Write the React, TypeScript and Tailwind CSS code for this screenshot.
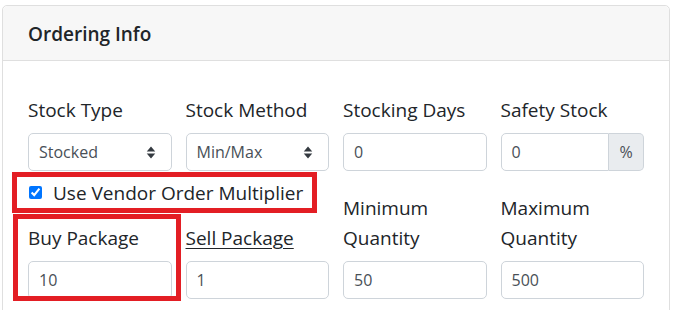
import React from "react";

function Arrow() {
  return (
    <svg width="10" height="13" viewBox="0 0 4 5" preserveAspectRatio="none" className="shrink-0">
      <path d="M2 0.2L0.3 2.1h3.4zM2 4.8L0.3 2.9h3.4z" fill="#343a40" />
    </svg>
  );
}

function Select({ value }: { value: string }) {
  return (
    <div className="h-[38px] border border-[#ced4da] rounded-[5px] pl-[10px] pr-[15px] flex items-center justify-between text-[16px] text-[#495057] bg-white">
      <span>{value}</span>
      <Arrow />
    </div>
  );
}

function TextInput({ value }: { value: string }) {
  return (
    <div className="h-[38px] border border-[#ced4da] rounded-[5px] px-[10px] flex items-center text-[16px] text-[#495057] bg-white">
      {value}
    </div>
  );
}

function Label({ children, underline }: { children: React.ReactNode; underline?: boolean }) {
  return (
    <div className={"text-[19px] leading-[30px] pt-[1px] mb-[8px] text-[#212529]" + (underline ? " underline underline-offset-[3px]" : "")}>
      {children}
    </div>
  );
}

export default function App() {
  return (
    <div className="relative w-[676px] h-[310px] overflow-hidden bg-white pl-[2px] pt-[5px] font-['Open_Sans','Noto_Sans',sans-serif] text-[#212529]">
      <div className="w-[668px] h-[400px] border border-[#dfdfdf] rounded-[5px]">
        <div className="bg-[#f7f7f7] border-b border-[#dfdfdf] px-[25px] pt-[16px] pb-[14px] text-[19px] leading-[24px] font-semibold rounded-t-[5px]">
          Ordering Info
        </div>
        <div className="px-[25px] pt-[33px]">
          <div className="grid grid-cols-4 gap-x-[14px]">
            <div>
              <Label>Stock Type</Label>
              <Select value="Stocked" />
            </div>
            <div>
              <Label>Stock Method</Label>
              <Select value="Min/Max" />
            </div>
            <div>
              <Label>Stocking Days</Label>
              <TextInput value="0" />
            </div>
            <div>
              <Label>Safety Stock</Label>
              <div className="h-[38px] flex text-[16px] text-[#495057]">
                <div className="flex-1 border border-[#ced4da] rounded-l-[5px] px-[10px] flex items-center bg-white">0</div>
                <div className="w-[35px] border border-l-0 border-[#ced4da] rounded-r-[5px] bg-[#e9ecef] flex items-center justify-center">%</div>
              </div>
            </div>
          </div>
          <div className="grid grid-cols-4 gap-x-[14px] items-end mt-[6px]">
            <div>
              <label className="h-[30px] pt-[1px] flex items-center gap-[11px] whitespace-nowrap text-[19px] leading-[30px]">
                <input type="checkbox" defaultChecked className="w-[15px] h-[15px] accent-[#0075ff] m-0 ml-[1px]" />
                <span>Use Vendor Order Multiplier</span>
              </label>
              <div className="mt-[15px]">
                <Label>Buy Package</Label>
              </div>
              <TextInput value="10" />
            </div>
            <div>
              <Label underline>Sell Package</Label>
              <TextInput value="1" />
            </div>
            <div>
              <Label>
                Minimum
                <br />
                Quantity
              </Label>
              <TextInput value="50" />
            </div>
            <div>
              <Label>
                Maximum
                <br />
                Quantity
              </Label>
              <TextInput value="500" />
            </div>
          </div>
        </div>
      </div>
      <div className="absolute left-[12px] top-[172px] w-[305px] h-[41px] border-[5px] border-[#e31e24]" />
      <div className="absolute left-[13px] top-[214px] w-[168px] h-[87px] border-[5px] border-[#e31e24]" />
    </div>
  );
}
